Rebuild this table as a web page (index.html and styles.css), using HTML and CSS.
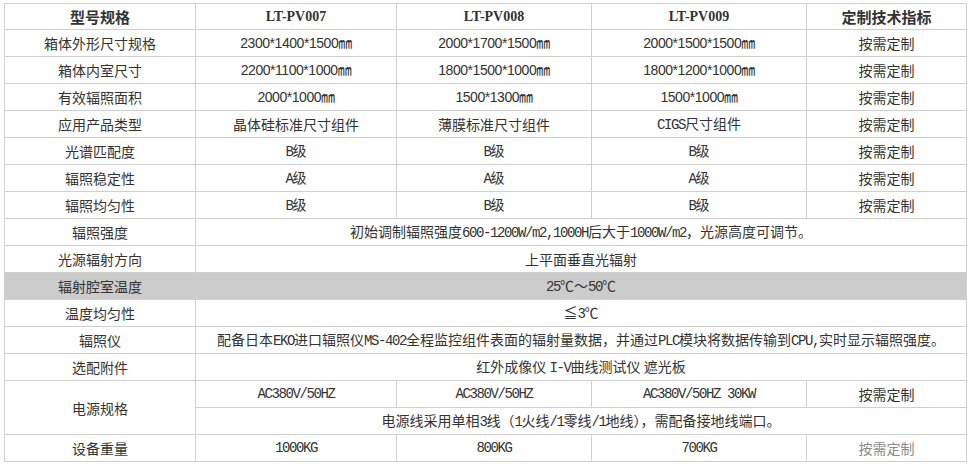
FILE: index.html
```html
<!DOCTYPE html>
<html lang="zh-CN">
<head>
<meta charset="utf-8">
<title>型号规格</title>
<link rel="stylesheet" href="styles.css">
</head>
<body>
<table class="spec">
  <colgroup>
    <col class="c1"><col class="c2"><col class="c3"><col class="c4"><col class="c5">
  </colgroup>
  <thead>
    <tr>
      <th>型号规格</th>
      <th class="model">LT-PV007</th>
      <th class="model">LT-PV008</th>
      <th class="model">LT-PV009</th>
      <th>定制技术指标</th>
    </tr>
  </thead>
  <tbody>
    <tr><td>箱体外形尺寸规格</td><td class="num">2300*1400*1500㎜</td><td class="num">2000*1700*1500㎜</td><td class="num">2000*1500*1500㎜</td><td>按需定制</td></tr>
    <tr><td>箱体内室尺寸</td><td class="num">2200*1100*1000㎜</td><td class="num">1800*1500*1000㎜</td><td class="num">1800*1200*1000㎜</td><td>按需定制</td></tr>
    <tr><td>有效辐照面积</td><td class="num">2000*1000㎜</td><td class="num">1500*1300㎜</td><td class="num">1500*1000㎜</td><td>按需定制</td></tr>
    <tr><td>应用产品类型</td><td>晶体硅标准尺寸组件</td><td>薄膜标准尺寸组件</td><td><span class="lat">CIGS</span>尺寸组件</td><td>按需定制</td></tr>
    <tr><td>光谱匹配度</td><td><span class="lat">B</span>级</td><td><span class="lat">B</span>级</td><td><span class="lat">B</span>级</td><td>按需定制</td></tr>
    <tr><td>辐照稳定性</td><td><span class="lat">A</span>级</td><td><span class="lat">A</span>级</td><td><span class="lat">A</span>级</td><td>按需定制</td></tr>
    <tr><td>辐照均匀性</td><td><span class="lat">B</span>级</td><td><span class="lat">B</span>级</td><td><span class="lat">B</span>级</td><td>按需定制</td></tr>
    <tr><td>辐照强度</td><td colspan="4">初始调制辐照强度<span class="lat">600-1200W/m2,1000H</span>后大于<span class="lat">1000W/m2</span>，光源高度可调节。</td></tr>
    <tr><td>光源辐射方向</td><td colspan="4">上平面垂直光辐射</td></tr>
    <tr class="shade"><td>辐射腔室温度</td><td colspan="4"><span class="lat">25</span>℃～<span class="lat">50</span>℃</td></tr>
    <tr><td>温度均匀性</td><td colspan="4">≦<span class="lat">3</span>℃</td></tr>
    <tr><td>辐照仪</td><td colspan="4">配备日本<span class="lat">EKO</span>进口辐照仪<span class="lat">MS-402</span>全程监控组件表面的辐射量数据，并通过<span class="lat">PLC</span>模块将数据传输到<span class="lat">CPU,</span>实时显示辐照强度。</td></tr>
    <tr><td>选配附件</td><td colspan="4">红外成像仪 <span class="lat">I-V</span>曲线测试仪 遮光板</td></tr>
    <tr><td rowspan="2">电源规格</td><td class="lat">AC380V/50HZ</td><td class="lat">AC380V/50HZ</td><td class="lat">AC380V/50HZ 30KW</td><td>按需定制</td></tr>
    <tr><td colspan="4">电源线采用单相<span class="lat">3</span>线（<span class="lat">1</span>火线<span class="lat">/1</span>零线<span class="lat">/1</span>地线），需配备接地线端口。</td></tr>
    <tr><td>设备重量</td><td class="lat">1000KG</td><td class="lat">800KG</td><td class="lat">700KG</td><td class="light">按需定制</td></tr>
  </tbody>
</table>
</body>
</html>
```

FILE: styles.css
```css
html, body {
  background: #ffffff;
}
body {
  margin: 3px 0 0 4px;
  font-family: "Noto Sans CJK SC", "Noto Sans", sans-serif;
  font-size: 14px;
  color: #333333;
}
.spec {
  border-collapse: collapse;
  table-layout: fixed;
  width: 962px;
}
.c1 { width: 191px; }
.c2 { width: 201px; }
.c3 { width: 195px; }
.c4 { width: 215px; }
.c5 { width: 160px; }
.spec th,
.spec td {
  border: 1px solid #cfcfcf;
  height: 26px;
  padding: 0;
  text-align: center;
  vertical-align: middle;
  line-height: 18px;
  white-space: nowrap;
  overflow: hidden;
}
.spec th {
  height: 25px;
  font-weight: bold;
  font-size: 15px;
  color: #333333;
}
.spec th.model {
  font-family: "Liberation Serif", serif;
  font-size: 14px;
  letter-spacing: 0;
}
.num {
  font-family: "Liberation Sans", "Noto Sans CJK SC", sans-serif;
  letter-spacing: -0.45px;
}
.lat {
  font-family: "Liberation Mono", "Noto Sans CJK SC", monospace;
  letter-spacing: -1.4px;
}
.shade td {
  background: #cccccc;
}
.light {
  color: #8a8a8a;
}
```
